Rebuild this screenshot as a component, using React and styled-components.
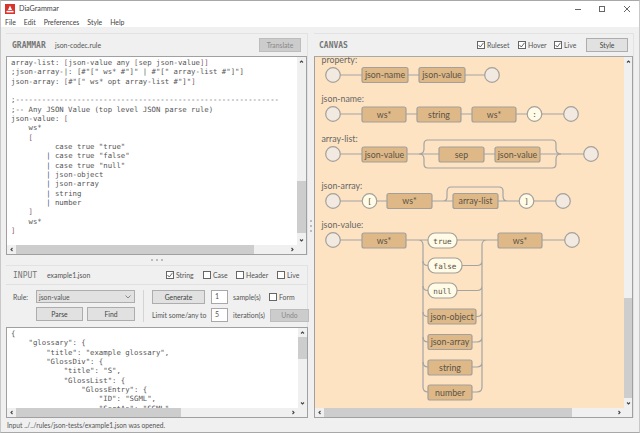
import React from "react";
import styled, { createGlobalStyle } from "styled-components";

const GlobalStyle = createGlobalStyle`
html, body {
  margin: 0;
  padding: 0;
  background: #f0f0f0;
  overflow: hidden;
}
* { box-sizing: border-box; }
`

const UI_FONT = `Lato, "Open Sans", sans-serif`
const MONO_FONT = `"DejaVu Sans Mono", "Liberation Mono", monospace`

const Win = styled.div`
width: 640px;
height: 433px;
display: flex;
flex-direction: column;
border: 1px solid #a8a8a8;
border-left-color: #c8c8c8;
border-right-color: #c8c8c8;
background: #f0f0f0;
font-family: ${UI_FONT};
font-size: 6.8px;
color: #555;
overflow: hidden;
`

const TitleBar = styled.div`
height: 15px;
display: flex;
align-items: center;
background: #fff;
padding-left: 4px;
flex: none;
`

const AppTitle = styled.div`
margin-left: 4px;
font-size: 7.2px;
color: #444;
flex: 1;
`

const WinButtons = styled.div`
display: flex;
width: 73px;
height: 15px;
align-items: center;
color: #666;
`

const WinButton = styled.div`
width: 25px;
display: flex;
justify-content: center;
`

const MenuBar = styled.div`
height: 11px;
display: flex;
background: #fff;
padding-left: 4px;
gap: 8px;
align-items: center;
flex: none;
font-size: 6.9px;
color: #444;
`

const Main = styled.div`
flex: none;
height: 391px;
display: grid;
grid-template-columns: 302px 6px 320px;
padding: 6px 5px 0;
`

const Column = styled.div`
display: flex;
flex-direction: column;
height: 385px;
`

const Panel = styled.div`
display: flex;
flex-direction: column;
border-top: 1px solid #e2e2e2;
border-right: 1px solid #e2e2e2;
flex: ${p => p.$flex || "none"};
height: ${p => p.$height ? `${p.$height}px` : "auto"};
min-height: 0;
`

const PanelHead = styled.div`
height: ${p => p.$h || 22}px;
display: flex;
align-items: center;
padding: 0 ${p => p.$pr || 6}px 0 ${p => p.$pl || 6}px;
flex: none;
`

const PanelTitle = styled.div`
font-family: ${MONO_FONT};
font-size: 8px;
font-weight: ${p => p.$regular ? 400 : 700};
color: #777;
width: ${p => p.$w}px;
flex: none;
`

const FileName = styled.div`
font-size: 6.9px;
color: #555;
flex: 1;
`

const Button = styled.div`
height: ${p => p.$h || 14}px;
width: ${p => p.$w}px;
flex: none;
display: flex;
align-items: center;
justify-content: center;
border: 1px solid ${p => p.$disabled ? "#bdbdbd" : "#adadad"};
background: ${p => p.$disabled ? "#cccccc" : "#e1e1e1"};
color: ${p => p.$disabled ? "#8a8a8a" : "#444"};
font-size: 6.8px;
`

const Editor = styled.div`
flex: 1;
min-height: 0;
display: grid;
grid-template-columns: 1fr 9px;
grid-template-rows: 1fr 9px;
border: 1px solid #a0a0a0;
background: #fff;
`

const Code = styled.pre`
margin: 0;
padding: 1px 0 0 4px;
overflow: hidden;
font-family: ${MONO_FONT};
font-size: 7.3px;
line-height: 9.33px;
color: #555;
background: #fff;
`

const Bracket = styled.span`
color: #8a5f70;
`

const Pipe = styled.span`
color: #3f4f80;
`

const VBar = styled.div`
display: flex;
flex-direction: column;
align-items: center;
background: #f0f0f0;
overflow: hidden;
`

const VTrack = styled.div`
flex: 1;
width: 100%;
min-height: 0;
`

const VThumb = styled.div`
margin-top: ${p => p.$top}px;
height: ${p => p.$len}px;
background: #cdcdcd;
`

const HBar = styled.div`
display: flex;
align-items: center;
background: #f0f0f0;
overflow: hidden;
`

const HTrack = styled.div`
flex: 1;
height: 100%;
min-width: 0;
`

const HThumb = styled.div`
width: ${p => p.$len}px;
height: 100%;
background: #cdcdcd;
`

const Arrow = styled.svg`
flex: none;
width: 9px;
height: 9px;
`

const Corner = styled.div`
background: #f0f0f0;
`

const arrowPaths = {
  up: "M3 5.5 L4.5 4 L6 5.5",
  down: "M3 3.5 L4.5 5 L6 3.5",
  left: "M5.5 3 L4 4.5 L5.5 6",
  right: "M3.5 3 L5 4.5 L3.5 6",
}

const ScrollArrow = ({ dir }) => (
  <Arrow viewBox="0 0 9 9">
    <path d={arrowPaths[dir]} fill="none" stroke="#444" strokeWidth="1.1" />
  </Arrow>
)

const VScroll = ({ top, len }) => (
  <VBar>
    <ScrollArrow dir="up" />
    <VTrack><VThumb $top={top} $len={len} /></VTrack>
    <ScrollArrow dir="down" />
  </VBar>
)

const HScroll = ({ len }) => (
  <HBar>
    <ScrollArrow dir="left" />
    <HTrack><HThumb $len={len} /></HTrack>
    <ScrollArrow dir="right" />
  </HBar>
)

const Splitter = styled.div`
height: 10px;
flex: none;
display: flex;
align-items: center;
justify-content: center;
gap: 3px;
`

const VSplitter = styled.div`
display: flex;
flex-direction: column;
align-items: center;
justify-content: center;
gap: 3px;
`

const Dot = styled.div`
width: 2px;
height: 2px;
background: #bcbcbc;
`

const CheckRow = styled.div`
display: flex;
align-items: center;
margin-right: ${p => p.$mr || 0}px;
`

const CheckItem = styled.div`
display: flex;
align-items: center;
gap: 2px;
width: ${p => p.$w ? `${p.$w}px` : "auto"};
font-size: 6.9px;
color: #555;
white-space: nowrap;
`

const Box = styled.div`
width: 8px;
height: 8px;
border: 1px solid #666;
background: #fff;
display: flex;
flex: none;
`

const Check = ({ on, w, children }) => (
  <CheckItem $w={w}>
    <Box>
      {on && (
        <svg width="6" height="6" viewBox="0 0 6 6">
          <path d="M0.5 3 L2.3 5 L5.5 0.8" fill="none" stroke="#555" strokeWidth="0.9" />
        </svg>
      )}
    </Box>
    {children}
  </CheckItem>
)

const Controls = styled.div`
height: 43px;
display: flex;
flex: none;
padding: 5px 0 0 7px;
border-top: 1px solid #e0e0e0;
`

const LeftBlock = styled.div`
width: 122px;
display: flex;
flex-direction: column;
gap: 4px;
flex: none;
`

const Row = styled.div`
display: flex;
align-items: center;
gap: ${p => p.$gap || 0}px;
margin-left: ${p => p.$ml || 0}px;
margin-top: ${p => p.$mt || 0}px;
`

const RowLabel = styled.div`
width: ${p => p.$w}px;
margin-left: ${p => p.$ml || 0}px;
flex: none;
white-space: nowrap;
font-size: 6.9px;
color: #555;
`

const Select = styled.div`
width: 99px;
height: 13px;
border: 1px solid #adadad;
background: #e1e1e1;
display: flex;
align-items: center;
justify-content: space-between;
padding: 0 3px 0 2px;
font-size: 6.8px;
color: #555;
`

const Divider = styled.div`
width: 1px;
height: 32px;
background: #d4d4d4;
margin: 0 8px;
flex: none;
`

const RightBlock = styled.div`
display: flex;
flex-direction: column;
flex: none;
width: 158px;
`

const NumField = styled.div`
width: 17px;
height: 14px;
margin-left: ${p => p.$ml || 0}px;
border: 1px solid #a8a8a8;
background: #fff;
padding-left: 3px;
line-height: 11px;
font-size: 7px;
color: #555;
flex: none;
`

const StatusBar = styled.div`
flex: 1;
display: flex;
align-items: center;
padding-left: 6px;
font-size: 6.7px;
color: #555;
`

const CanvasBox = styled.div`
flex: 1;
min-height: 0;
display: grid;
grid-template-columns: 1fr 8px;
grid-template-rows: 1fr 9px;
border: 1px solid #a0a0a0;
border-top-color: #a8a8a8;
background: #f0f0f0;
`

const Board = styled.div`
background: #fde3c2;
overflow: hidden;
`

const Diagram = styled.svg`
display: block;
width: 310px;
height: 353px;
`

const WIRE = "#a3a3a3"
const EDGE = "#a3a09b"

const Wire = ({ d }) => <path d={d} fill="none" stroke={WIRE} strokeWidth="1.2" />

const Terminal = ({ x, y }) => (
  <circle cx={x} cy={y} r="7.3" fill="#f2e9e0" stroke={EDGE} strokeWidth="1.2" />
)

const Rule = ({ x, y, w, h = 15, label }) => (
  <g>
    <rect x={x} y={y} width={w} height={h} rx="2" fill="#deb887" stroke={EDGE} strokeWidth="1.2" />
    <text x={x + w / 2} y={y + h / 2 + 3} textAnchor="middle" fontFamily={UI_FONT} fontSize="8.8" fill="#5a5348">{label}</text>
  </g>
)

const Literal = ({ x, y, w, label }) => (
  <g>
    <rect x={x} y={y} width={w} height="15" rx="7" fill="#fffbe6" stroke={EDGE} strokeWidth="1.2" />
    <text x={x + w / 2} y={y + 10.5} textAnchor="middle" fontFamily={MONO_FONT} fontSize="7.6" fill="#5a5348">{label}</text>
  </g>
)

const Token = ({ x, y, label }) => (
  <g>
    <circle cx={x} cy={y} r="7.3" fill="#fffbe6" stroke={EDGE} strokeWidth="1.2" />
    <text x={x} y={y + 3} textAnchor="middle" fontFamily={MONO_FONT} fontSize="7.6" fill="#5a5348">{label}</text>
  </g>
)

const Caption = ({ y, children }) => (
  <text x="321.5" y={y} fontFamily={UI_FONT} fontSize="8.8" fill="#666">{children}</text>
)

const grammar = (
  <>
    array-list: <Bracket>[</Bracket>json-value any <Bracket>[</Bracket>sep json-value<Bracket>]]</Bracket>{"\n"}
    ;json-array-|: [#"[" ws* #"]" | #"[" array-list #"]"]{"\n"}
    json-array: <Bracket>[</Bracket>#"[" ws* opt array-list #"]"<Bracket>]</Bracket>{"\n"}
    {"\n"}
    ;------------------------------------------------------------{"\n"}
    ;-- Any JSON Value (top level JSON parse rule){"\n"}
    json-value: <Bracket>[</Bracket>{"\n"}
    {"    ws*\n"}
    {"    "}<Bracket>[</Bracket>{"\n"}
    {"          case true \"true\"\n"}
    {"        "}<Pipe>|</Pipe>{" case true \"false\"\n"}
    {"        "}<Pipe>|</Pipe>{" case true \"null\"\n"}
    {"        "}<Pipe>|</Pipe>{" json-object\n"}
    {"        "}<Pipe>|</Pipe>{" json-array\n"}
    {"        "}<Pipe>|</Pipe>{" string\n"}
    {"        "}<Pipe>|</Pipe>{" number\n"}
    {"    "}<Bracket>]</Bracket>{"\n"}
    {"    ws*\n"}
    <Bracket>]</Bracket>
  </>
)

const json = `{
    "glossary": {
        "title": "example glossary",
        "GlossDiv": {
            "title": "S",
            "GlossList": {
                "GlossEntry": {
                    "ID": "SGML",
                    "SortAs": "SGML",`

const App = () => (
  <Win>
    <GlobalStyle />
    <TitleBar>
      <svg width="10" height="10" viewBox="0 0 10 10">
        <rect width="10" height="10" fill="#d8342c" />
        <path d="M5 1.5 L7 6 H3 Z" fill="#fff" />
        <rect x="1.5" y="6.8" width="7" height="1.6" fill="#fff" />
      </svg>
      <AppTitle>DiaGrammar</AppTitle>
      <WinButtons>
        <WinButton>
          <svg width="8" height="8" viewBox="0 0 8 8"><path d="M1 4.5 H7" stroke="#666" /></svg>
        </WinButton>
        <WinButton>
          <svg width="8" height="8" viewBox="0 0 8 8"><rect x="1.5" y="1.5" width="5" height="5" fill="none" stroke="#666" /></svg>
        </WinButton>
        <WinButton>
          <svg width="8" height="8" viewBox="0 0 8 8"><path d="M1 1 L7 7 M7 1 L1 7" stroke="#666" /></svg>
        </WinButton>
      </WinButtons>
    </TitleBar>
    <MenuBar>
      <span>File</span>
      <span>Edit</span>
      <span>Preferences</span>
      <span>Style</span>
      <span>Help</span>
    </MenuBar>

    <Main>
      <Column>
        <Panel $height={222}>
          <PanelHead>
            <PanelTitle $w={43}>GRAMMAR</PanelTitle>
            <FileName>json-codec.rule</FileName>
            <Button $disabled $w={42}>Translate</Button>
          </PanelHead>
          <Editor>
            <Code>{grammar}</Code>
            <VScroll top={115} len={52} />
            <HScroll len={238} />
            <Corner />
          </Editor>
        </Panel>

        <Splitter><Dot /><Dot /><Dot /></Splitter>

        <Panel>
          <PanelHead $h={18} $pl={7} $pr={1}>
            <PanelTitle $regular $w={34}>INPUT</PanelTitle>
            <FileName>example1.json</FileName>
            <CheckRow $mr={9}>
              <Check on w={37}>String</Check>
              <Check w={33}>Case</Check>
              <Check w={41}>Header</Check>
              <Check w={20}>Live</Check>
            </CheckRow>
          </PanelHead>
          <Controls>
            <LeftBlock>
              <Row>
                <RowLabel $w={23}>Rule:</RowLabel>
                <Select>
                  json-value
                  <svg width="6" height="4" viewBox="0 0 6 4"><path d="M0.5 0.5 L3 3 L5.5 0.5" fill="none" stroke="#888" /></svg>
                </Select>
              </Row>
              <Row $ml={23} $gap={4}>
                <Button $w={47}>Parse</Button>
                <Button $w={48}>Find</Button>
              </Row>
            </LeftBlock>
            <Divider />
            <RightBlock>
              <Row>
                <Button $w={53}>Generate</Button>
                <NumField $ml={6}>1</NumField>
                <RowLabel $w={36} $ml={5}>sample(s)</RowLabel>
                <Check>Form</Check>
              </Row>
              <Row $mt={4}>
                <RowLabel $w={59}>Limit some/any to</RowLabel>
                <NumField>5</NumField>
                <RowLabel $w={37} $ml={5}>iteration(s)</RowLabel>
                <Button $disabled $w={39} $h={13}>Undo</Button>
              </Row>
            </RightBlock>
          </Controls>
        </Panel>

        <Editor>
          <Code>{json}</Code>
          <VScroll top={0} len={22} />
          <HScroll len={165} />
          <Corner />
        </Editor>
      </Column>

      <VSplitter><Dot /><Dot /><Dot /></VSplitter>

      <Column>
        <Panel $flex="1">
          <PanelHead $pl={5} $pr={5}>
            <PanelTitle $w={40}>CANVAS</PanelTitle>
            <FileName />
            <CheckRow $mr={12}>
              <Check on w={41}>Ruleset</Check>
              <Check on w={36}>Hover</Check>
              <Check on w={20}>Live</Check>
            </CheckRow>
            <Button $w={42}>Style</Button>
          </PanelHead>
          <CanvasBox>
            <Board>
              <Diagram viewBox="315 56 310 353">
                <Caption y={62}>property:</Caption>
                <Wire d="M340 74 H362 M408 74 H419 M465 74 H485" />
                <Terminal x={333} y={74} />
                <Rule x={362} y={66.5} w={46} label="json-name" />
                <Rule x={419} y={66.5} w={46} label="json-value" />
                <Terminal x={492} y={74} />

                <Caption y={101}>json-name:</Caption>
                <Wire d="M340 113 H362 M406 113 H417 M461 113 H472 M516 113 H527 M542 113 H564" />
                <Terminal x={333} y={113} />
                <Rule x={362} y={106} w={44} label="ws*" />
                <Rule x={417} y={106} w={44} label="string" />
                <Rule x={472} y={106} w={44} label="ws*" />
                <Token x={534.5} y={113} label=":" />
                <Terminal x={571} y={113} />

                <Caption y={141}>array-list:</Caption>
                <Wire d="M340 153 H362 M407 153 H419 Q424 153 424 148 V143 Q424 139 428 139 H552 Q556 139 556 143 V148 Q556 153 561 153 H584" />
                <Wire d="M419 153 Q424 153 424 158 V163 Q424 167 428 167 H552 Q556 167 556 163 V158 Q556 153 561 153 M419 153 H439 M484 153 H495 M540 153 H561" />
                <Terminal x={333} y={153} />
                <Rule x={362} y={146} w={45} label="json-value" />
                <Rule x={439} y={146} w={45} label="sep" />
                <Rule x={495} y={146} w={45} label="json-value" />
                <Terminal x={591} y={153} />

                <Caption y={188}>json-array:</Caption>
                <Wire d="M340 200 H362 M377 200 H387 M432 200 H443 Q447 200 447 196 V191 Q447 186 451 186 H499 Q503 186 503 190 V195 Q503 200 507 200 H519 M443 200 H453 M498 200 H507 M534 200 H556" />
                <Terminal x={333} y={200} />
                <Token x={369.5} y={200} label="[" />
                <Rule x={387} y={192.5} w={45} label="ws*" />
                <Rule x={453} y={192.5} w={45} label="array-list" />
                <Token x={526.5} y={200} label="]" />
                <Terminal x={563} y={200} />

                <Caption y={227}>json-value:</Caption>
                <Wire d="M340 239 H362 M406 239 H428 M418 239 Q423 239 423 244 V386 Q423 391 428 391" />
                <Wire d="M423 260 Q423 264.5 428 264.5 M423 285 Q423 289.5 428 289.5 M423 311 Q423 315.5 428 315.5 M423 336 Q423 341 428 341 M423 361 Q423 366 428 366" />
                <Wire d="M457 239 H498 M487 239 Q482 239 482 244 V386 Q482 391 477 391 H472 M462 264.5 H477 Q482 264.5 482 260 M457 289.5 H477 Q482 289.5 482 285 M476 315.5 H477 Q482 315.5 482 311 M472 341 H477 Q482 341 482 336 M472 366 H477 Q482 366 482 361 M542 239 H565" />
                <Terminal x={333} y={239} />
                <Rule x={362} y={232} w={44} label="ws*" />
                <Literal x={428} y={232} w={29} label="true" />
                <Literal x={428} y={257} w={34} label="false" />
                <Literal x={428} y={282} w={29} label="null" />
                <Rule x={428} y={308} w={48} label="json-object" />
                <Rule x={428} y={333.5} w={44} label="json-array" />
                <Rule x={428} y={359} w={44} label="string" />
                <Rule x={428} y={384} w={44} label="number" />
                <Rule x={498} y={232} w={44} label="ws*" />
                <Terminal x={572} y={239} />
              </Diagram>
            </Board>
            <VScroll top={232} len={100} />
            <HScroll len={248} />
            <Corner />
          </CanvasBox>
        </Panel>
      </Column>
    </Main>

    <StatusBar>Input ../../rules/json-tests/example1.json was opened.</StatusBar>
  </Win>
)

export default App
